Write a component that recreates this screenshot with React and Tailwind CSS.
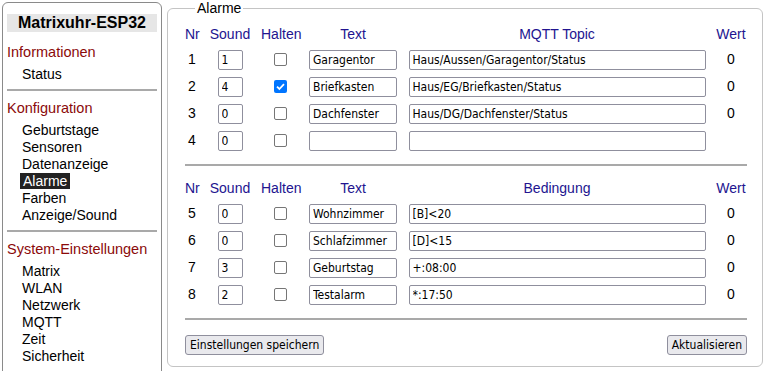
import React from 'react';

const sans = { fontFamily: '"Liberation Sans", Arial, sans-serif' };

const menu = [
    { title: 'Informationen', items: ['Status'] },
    { title: 'Konfiguration', items: ['Geburtstage', 'Sensoren', 'Datenanzeige', 'Alarme', 'Farben', 'Anzeige/Sound'] },
    { title: 'System-Einstellungen', items: ['Matrix', 'WLAN', 'Netzwerk', 'MQTT', 'Zeit', 'Sicherheit'] },
];

const mqttAlarms = [
    { nr: 1, sound: '1', halten: false, text: 'Garagentor', topic: 'Haus/Aussen/Garagentor/Status', wert: '0' },
    { nr: 2, sound: '4', halten: true, text: 'Briefkasten', topic: 'Haus/EG/Briefkasten/Status', wert: '0' },
    { nr: 3, sound: '0', halten: false, text: 'Dachfenster', topic: 'Haus/DG/Dachfenster/Status', wert: '0' },
    { nr: 4, sound: '0', halten: false, text: '', topic: '', wert: '' },
];

const condAlarms = [
    { nr: 5, sound: '0', halten: false, text: 'Wohnzimmer', topic: '[B]<20', wert: '0' },
    { nr: 6, sound: '0', halten: false, text: 'Schlafzimmer', topic: '[D]<15', wert: '0' },
    { nr: 7, sound: '3', halten: false, text: 'Geburtstag', topic: '+:08:00', wert: '0' },
    { nr: 8, sound: '2', halten: false, text: 'Testalarm', topic: '*:17:50', wert: '0' },
];

const inputFont = 'font-["DejaVu_Sans_Condensed","Noto_Sans",sans-serif] text-[12px] text-black';

const Field = ({ value, width }) => (
    <input
        readOnly
        value={value}
        className={`h-[20px] ${width} px-[3px] bg-white border border-[#8f8f9d] rounded-[2px] outline-none ${inputFont}`}
    />
);

const Check = ({ checked }) =>
    checked ? (
        <span className="w-[13px] h-[13px] rounded-[2px] bg-[#0075ff] flex items-center justify-center">
            <svg width="11" height="11" viewBox="0 0 11 11">
                <path d="M2 5.6 L4.4 8 L9 3.2" fill="none" stroke="white" strokeWidth="1.8" />
            </svg>
        </span>
    ) : (
        <span className="w-[13px] h-[13px] rounded-[2px] bg-white border border-[#767676]" />
    );

const Grid = ({ label, rows }) => (
    <div className="grid grid-cols-[14px_62px_38px_108px_300px_39px] grid-rows-[24px_repeat(4,27px)] items-center text-[14px]">
        {['Nr', 'Sound', 'Halten', 'Text', label].map(h => (
            <div key={h} className="text-center text-[#221490]">{h}</div>
        ))}
        <div className="pl-[9px] text-center text-[#221490]">Wert</div>
        {rows.map(r => (
            <React.Fragment key={r.nr}>
                <div className="text-center">{r.nr}</div>
                <div className="flex justify-center">
                    <Field value={r.sound} width="w-[25px]" />
                </div>
                <div className="flex justify-center">
                    <Check checked={r.halten} />
                </div>
                <div className="flex justify-center">
                    <Field value={r.text} width="w-[88px]" />
                </div>
                <div className="flex justify-center">
                    <Field value={r.topic} width="w-[297px]" />
                </div>
                <div className="pl-[9px] text-center">{r.wert}</div>
            </React.Fragment>
        ))}
    </div>
);

const Button = ({ children }) => (
    <button className={`h-[20px] px-[4px] bg-[#e9e9ed] border border-[#8f8f9d] rounded-[3px] ${inputFont}`}>
        {children}
    </button>
);

export default function App() {
    return (
        <div className="w-[765px] h-[371px] overflow-hidden bg-white text-black flex items-start pl-[2px]" style={sans}>
            {/* Sidebar */}
            <nav className="mt-[2px] w-[160px] h-[390px] shrink-0 border border-[#8a8a8a] rounded-[6px] px-[4px] pt-[11px]">
                <div className="h-[18px] bg-[#e6e6e6] text-center font-bold text-[16px] leading-[18px]">Matrixuhr-ESP32</div>
                {menu.map((sec, i) => (
                    <div key={sec.title} className={i === 0 ? 'mt-[12px]' : ''}>
                        {i > 0 && <div className="h-[2px] bg-[#a9a9a9] mt-[6px] mb-[9px]" />}
                        <div className="text-[14.5px] leading-[17px] text-[#8b0a0a] mb-[5px]">{sec.title}</div>
                        <ul className="text-[14px] leading-[17px]">
                            {sec.items.map(it => (
                                <li key={it} className="pl-[15px]">
                                    {it === 'Alarme' ? (
                                        <span className="-ml-[2px] px-[3px] bg-[#222] text-white">{it}</span>
                                    ) : (
                                        it
                                    )}
                                </li>
                            ))}
                        </ul>
                    </div>
                ))}
            </nav>

            {/* Main */}
            <fieldset className="ml-[5px] w-[596px] h-[367px] border border-[#c4c4c4] rounded-[6px] pl-[17px] pr-[15px]">
                <legend className="ml-[10px] px-[2px] text-[14px] leading-[16px]">Alarme</legend>
                <div className="pt-[6px]">
                    <Grid label="MQTT Topic" rows={mqttAlarms} />
                    <div className="h-[2px] bg-[#a9a9a9] mt-[10px] mb-[10px]" />
                    <Grid label="Bedingung" rows={condAlarms} />
                    <div className="h-[2px] bg-[#a9a9a9] mt-[10px] mb-[15px]" />
                    <div className="flex justify-between">
                        <Button>Einstellungen speichern</Button>
                        <Button>Aktualisieren</Button>
                    </div>
                </div>
            </fieldset>
        </div>
    );
}
